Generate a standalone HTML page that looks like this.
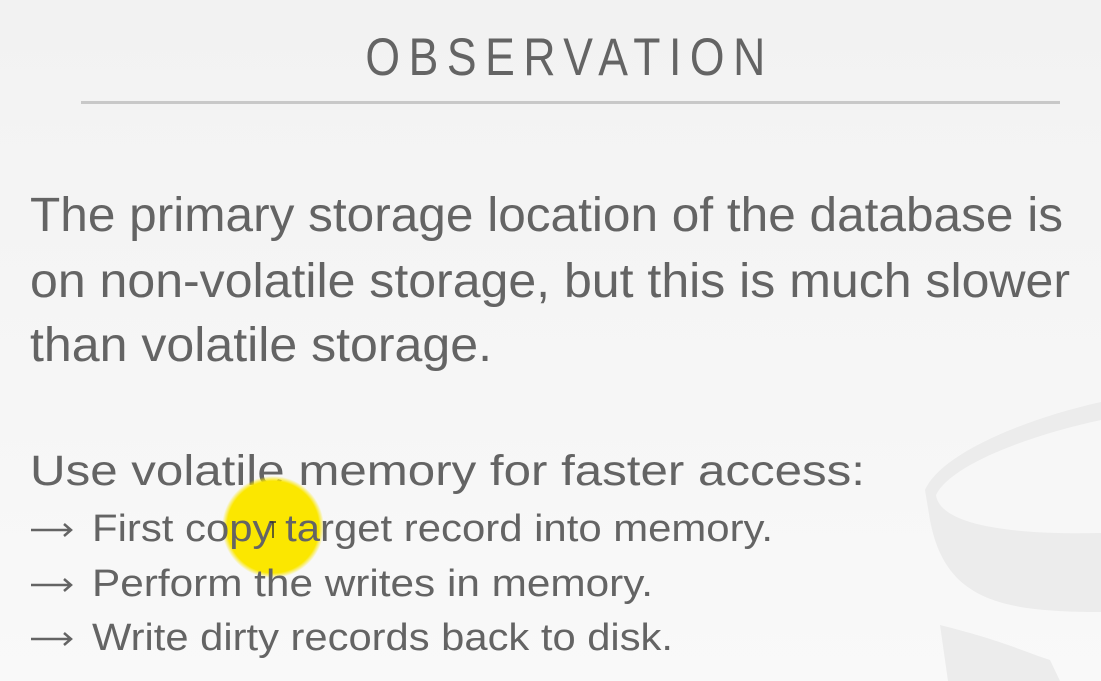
<!DOCTYPE html>
<html><head><meta charset="utf-8"><style>
html,body{margin:0;padding:0;width:1101px;height:681px;overflow:hidden;background:#f5f5f5}
svg{display:block}
text{font-family:"Liberation Sans",sans-serif;fill:#646464}
</style></head><body>
<svg width="1101" height="681" viewBox="0 0 1101 681" xmlns="http://www.w3.org/2000/svg">
<defs>
<linearGradient id="bg" x1="0" y1="0" x2="0" y2="1">
<stop offset="0" stop-color="#f2f2f2"/><stop offset="1" stop-color="#f9f9f9"/>
</linearGradient>
<radialGradient id="yl" cx="0.5" cy="0.5" r="0.5">
<stop offset="0.9" stop-color="#fbe700"/><stop offset="1" stop-color="#fbe700" stop-opacity="0"/>
</radialGradient>
</defs>
<rect width="1101" height="681" fill="url(#bg)"/>
<path d="M1101 402 C1020 420 940 455 925 490 L930 520 C945 600 1000 612 1101 612 Z" fill="#ececec"/>
<path d="M1101 420 C1030 435 950 465 936 495 C940 525 1010 535 1101 533 Z" fill="#f7f7f7"/>
<path d="M940 625 C1000 640 1020 650 1050 660 L1060 681 L948 681 Z" fill="#ececec"/>
<g transform="scale(0.84,1)">
<text x="435" y="75" font-size="53" textLength="476" lengthAdjust="spacing">OBSERVATION</text>
</g>
<rect x="81" y="101" width="979" height="3" fill="#c8c8c8"/>
<text x="30" y="231" font-size="48" textLength="1033" lengthAdjust="spacingAndGlyphs">The primary storage location of the database is</text>
<text x="30" y="297" font-size="48" textLength="1040" lengthAdjust="spacingAndGlyphs">on non-volatile storage, but this is much slower</text>
<text x="30" y="361" font-size="48" textLength="462" lengthAdjust="spacingAndGlyphs">than volatile storage.</text>
<text x="30" y="485" font-size="43" textLength="835" lengthAdjust="spacingAndGlyphs">Use volatile memory for faster access:</text>
<circle cx="273" cy="527" r="51" fill="url(#yl)"/>
<g stroke="#646464" stroke-width="2.5" fill="none">
<path d="M31 530 H71 M64 524 L71 530 L64 536"/>
<path d="M31 585 H71 M64 579 L71 585 L64 591"/>
<path d="M31 639 H71 M64 633 L71 639 L64 645"/>
</g>
<text x="92" y="541" font-size="38" textLength="681" lengthAdjust="spacingAndGlyphs">First copy target record into memory.</text>
<text x="92" y="596" font-size="38" textLength="561" lengthAdjust="spacingAndGlyphs">Perform the writes in memory.</text>
<text x="92" y="650" font-size="38" textLength="581" lengthAdjust="spacingAndGlyphs">Write dirty records back to disk.</text>
<path d="M273 522 v16 M270 522 h6" stroke="#333" stroke-width="1.5" fill="none"/>
</svg>
</body></html>
